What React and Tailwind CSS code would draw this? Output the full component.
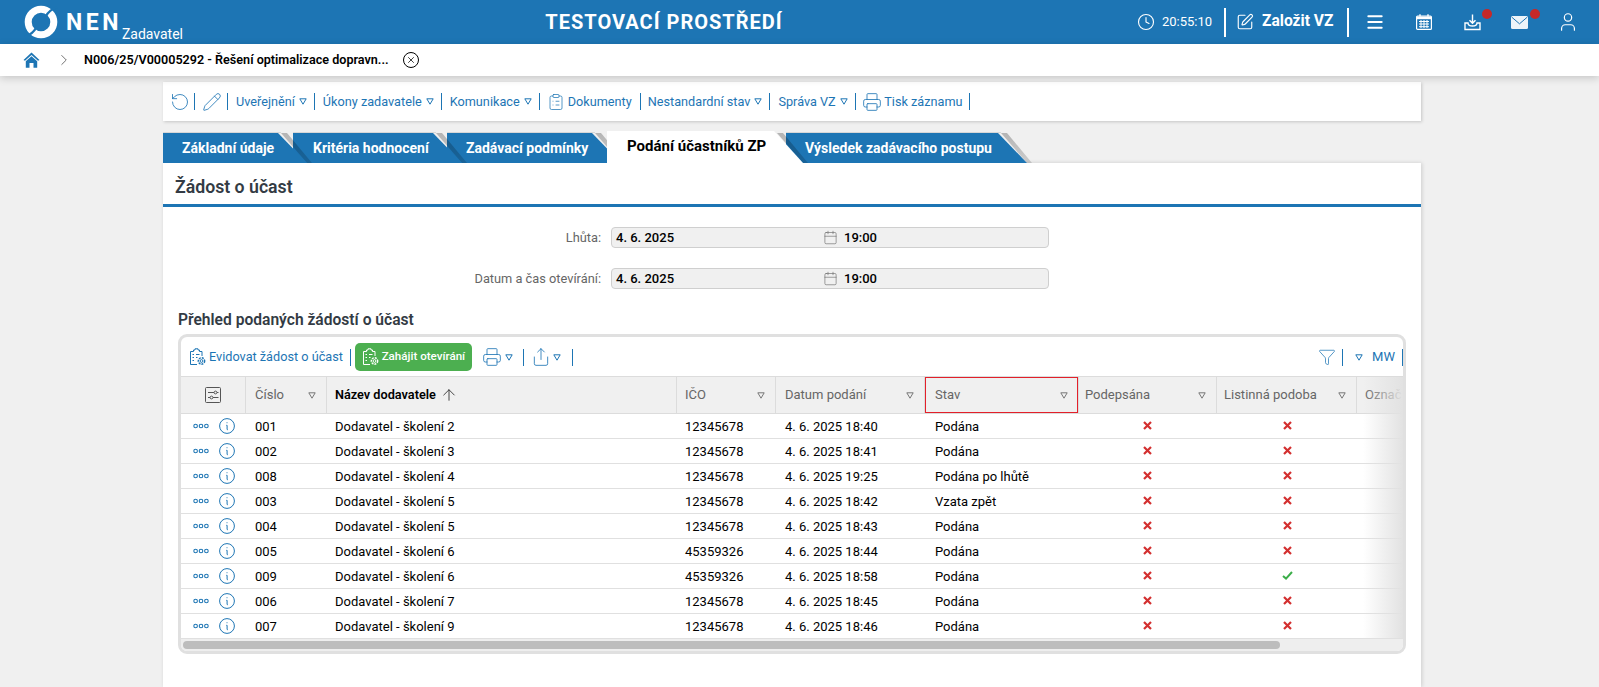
import { Clock, SquarePen, Menu, ChevronRight, RotateCcw, Pencil, ClipboardList, Printer, Share, Funnel, Calendar, ArrowUp, X, User } from 'lucide-react';

const BLUE = '#1d75b4';

const rows = [
  ['001', 'Dodavatel - školení 2', '12345678', '4. 6. 2025 18:40', 'Podána', false],
  ['002', 'Dodavatel - školení 3', '12345678', '4. 6. 2025 18:41', 'Podána', false],
  ['008', 'Dodavatel - školení 4', '12345678', '4. 6. 2025 19:25', 'Podána po lhůtě', false],
  ['003', 'Dodavatel - školení 5', '12345678', '4. 6. 2025 18:42', 'Vzata zpět', false],
  ['004', 'Dodavatel - školení 5', '12345678', '4. 6. 2025 18:43', 'Podána', false],
  ['005', 'Dodavatel - školení 6', '45359326', '4. 6. 2025 18:44', 'Podána', false],
  ['009', 'Dodavatel - školení 6', '45359326', '4. 6. 2025 18:58', 'Podána', true],
  ['006', 'Dodavatel - školení 7', '12345678', '4. 6. 2025 18:45', 'Podána', false],
  ['007', 'Dodavatel - školení 9', '12345678', '4. 6. 2025 18:46', 'Podána', false],
];

const gridCols = 'grid grid-cols-[65px_81px_350px_99px_149px_154px_138px_140px_46px]';

function Tri({ color = BLUE, className = '' }) {
  return (
    <svg width="8" height="7" viewBox="0 0 8 7" className={`shrink-0 ${className}`}>
      <path d="M0.8 0.8H7.2L4 6.2Z" fill="none" stroke={color} strokeWidth="1" />
    </svg>
  );
}

function Sep({ className = '' }) {
  return <span className={`block w-px h-[17px] bg-[#1d75b4] shrink-0 ${className}`} />;
}

function Logo() {
  return (
    <svg width="34" height="34" viewBox="0 0 34 34" className="shrink-0">
      <circle cx="17" cy="17" r="12.8" fill="none" stroke="#fff" strokeWidth="7" />
      <path d="M33 2C28 4 24.5 6.5 22 11" fill="none" stroke="#1d75b4" strokeWidth="2.4" />
      <path d="M1 32C6 30 9.5 27.5 12 23" fill="none" stroke="#1d75b4" strokeWidth="2.4" />
    </svg>
  );
}

function DownloadTray() {
  return (
    <svg width="17" height="17" viewBox="0 0 17 17" fill="none" stroke="#fff" strokeWidth="1.4" className="block">
      <path d="M8.5 0.5V9M5.5 6.2L8.5 9.3L11.5 6.2" />
      <path d="M4 9H1V15.5H16V9H13C13 11.5 11 12 8.5 12S4 11.5 4 9Z" />
    </svg>
  );
}

function MailFilled() {
  return (
    <svg width="17" height="13" viewBox="0 0 17 13" className="block">
      <rect width="17" height="13" rx="1.5" fill="#fff" fillOpacity="0.92" />
      <path d="M0.8 1.2L8.5 7.8L16.2 1.2" fill="none" stroke="#1d75b4" strokeWidth="1" />
    </svg>
  );
}

function CalendarGrid() {
  return (
    <svg width="16" height="16" viewBox="0 0 16 16" fill="none" stroke="#fff" className="shrink-0">
      <rect x="0.6" y="2.1" width="14.8" height="13.3" rx="1" strokeWidth="1.2" />
      <path d="M0.6 4H15.4" strokeWidth="2.4" />
      <path d="M4 0.3V2.5M12 0.3V2.5" strokeWidth="1.4" />
      <path d="M3 7.5H13M3 10H13M3 12.7H13M5 6V14M8 6V14M11 6V14" strokeWidth="1" />
    </svg>
  );
}

function HomeIcon() {
  return (
    <svg width="17" height="16" viewBox="0 0 17 16" className="block">
      <path d="M8.5 0.5L0.5 8L2 8.8L8.5 3L15 8.8L16.5 8Z" fill={BLUE} />
      <path d="M2.8 9.3L8.5 4.3L14.2 9.3V15.8H10.5V11H6.5V15.8H2.8Z" fill={BLUE} />
    </svg>
  );
}

function GearClipboard({ color = BLUE }) {
  return (
    <svg width="17" height="18" viewBox="0 0 17 18" fill="none" stroke={color} strokeWidth="1" className="shrink-0">
      <path d="M8 16.5H1.5V3.5H4.5V2H6V0.8H9V2H10.5V3.5H13V8" />
      <path d="M3.5 6.5H5M3.5 9.5H5M3.5 12.5H5M7 6.5H10.5M7 9.5H8.5" />
      <circle cx="12.5" cy="13" r="1.4" />
      <circle cx="12.5" cy="13" r="3.2" strokeDasharray="2 1" strokeWidth="1.4" />
    </svg>
  );
}

function InfoCircle() {
  return (
    <svg width="16" height="16" viewBox="0 0 16 16" fill="none" stroke={BLUE} strokeWidth="1">
      <circle cx="8" cy="8" r="7.4" />
      <path d="M8 4.3V5.2M7.3 7.3H8.1V11.2C8.1 11.8 8.6 11.9 9 11.6" />
    </svg>
  );
}

function Dots() {
  return (
    <svg width="16" height="6" viewBox="0 0 16 6" fill="none" stroke={BLUE} strokeWidth="1.1">
      <circle cx="2.6" cy="3" r="1.8" />
      <circle cx="8" cy="3" r="1.8" />
      <circle cx="13.4" cy="3" r="1.8" />
    </svg>
  );
}

function ColumnsIcon() {
  return (
    <svg width="16" height="16" viewBox="0 0 16 16" fill="none" stroke="#555" strokeWidth="1">
      <rect x="0.5" y="0.5" width="15" height="15" rx="1" />
      <path d="M3 5.5H9M12 5.5H13.5M3 10.5H5M8 10.5H13.5" />
      <circle cx="10.5" cy="5.5" r="1.4" />
      <circle cx="6.5" cy="10.5" r="1.4" />
    </svg>
  );
}

function CrossMark() {
  return (
    <svg width="9" height="9" viewBox="0 0 9 9" className="block mb-[2px]">
      <path d="M1 1L8 8M8 1L1 8" stroke="#d32f2f" strokeWidth="2.2" />
    </svg>
  );
}

function CheckMark() {
  return (
    <svg width="11" height="9" viewBox="0 0 11 9" className="block mb-[2px]">
      <path d="M1 5L4 7.6L10 1" fill="none" stroke="#3cae4a" strokeWidth="2" />
    </svg>
  );
}

function Tab({ children, className, pad = 'pl-[19px]', active }) {
  return (
    <div className={`relative h-[30px] ${className}`}>
      {!active && <span className="absolute -top-[1px] left-0 right-[26px] h-[1px] bg-black/10" />}
      <span className="absolute top-0 bottom-0 left-0 -right-[6px] bg-gradient-to-b from-black/25 to-black/15 [clip-path:polygon(calc(100%-32px)_0,calc(100%-26px)_0,calc(100%-1px)_100%,calc(100%-6px)_100%)]" />
      <div
        className={`flex items-center font-bold whitespace-nowrap [clip-path:polygon(0_0,calc(100%-29px)_0,100%_100%,0_100%)] ${pad} ${
          active ? 'bg-white text-black text-[15px] -mt-[2px] h-[32px] pb-[2px]' : 'h-full pt-[1px] bg-[#1d75b4] text-white text-[14px]'
        }`}
      >
        {children}
      </div>
    </div>
  );
}

function HeaderCell({ label, bold, sorted, highlighted, last, pl = 'pl-[9px]' }) {
  return (
    <div
      className={`relative flex items-center justify-between pr-[10px] h-[36px] bg-[#f0f0f0] whitespace-nowrap overflow-hidden ${pl} ${
        last ? 'pr-0' : 'border-r border-[#dcdcdc]'
      } ${bold ? 'text-black font-semibold text-[12.7px]' : 'text-[#666]'}`}
    >
      <span className="flex items-center gap-[4px]">
        {label}
        {sorted && <ArrowUp size={18} strokeWidth={1.2} className="text-[#333]" />}
      </span>
      {!sorted && !last && <Tri color="#777" />}
      {highlighted && <span className="absolute inset-0 border border-[#e3202a]" />}
    </div>
  );
}

function DateField() {
  return (
    <div className="ml-[10px] w-[438px] h-[21px] bg-[#f0f0f0] border border-[#cfcfcf] rounded-[4px] flex items-center pl-[4px] font-medium text-black">
      <span className="w-[207px]">4. 6. 2025</span>
      <Calendar size={15} strokeWidth={1} className="text-[#666]" />
      <span className="ml-[6px]">19:00</span>
    </div>
  );
}

export default function App() {
  return (
    <div className="h-[687px] overflow-hidden bg-[#f0f0f0] text-[13px] flex flex-col font-['Roboto',sans-serif]">
      <header className="relative h-[44px] bg-[#1d75b4] text-white flex items-center shrink-0">
        <div className="flex items-center pl-[24px] w-[191px] shrink-0">
          <Logo />
          <span className="ml-[8px] text-[23px] leading-none font-bold tracking-[3.5px]">NEN</span>
          <span className="self-end mt-[22px] text-[14px] leading-[16px] translate-y-[1px]">Zadavatel</span>
        </div>
        <div className="flex-1 text-center text-[20px] font-bold tracking-[1px]">TESTOVACÍ PROSTŘEDÍ</div>
        <div className="flex items-center shrink-0 pr-[20px]">
          <Clock size={18} strokeWidth={1.5} />
          <span className="ml-[7px] w-[50px]">20:55:10</span>
          <span className="ml-[12px] w-[2px] h-[29px] bg-white" />
          <SquarePen size={18} strokeWidth={1.5} className="ml-[10px]" />
          <span className="ml-[8px] text-[15.6px] font-bold w-[72px] whitespace-nowrap">Založit VZ</span>
          <span className="ml-[13px] w-[2px] h-[29px] bg-white" />
          <Menu size={20} strokeWidth={2.4} className="ml-[16px]" />
          <span className="ml-[31px]"><CalendarGrid /></span>
          <span className="relative ml-[32px] block">
            <DownloadTray />
            <span className="absolute -top-[5px] left-[18px] w-[10px] h-[10px] rounded-full bg-[#c62828]" />
          </span>
          <span className="relative ml-[30px] block">
            <MailFilled />
            <span className="absolute -top-[7px] left-[19px] w-[10px] h-[10px] rounded-full bg-[#c62828]" />
          </span>
          <User size={22} strokeWidth={1.3} className="ml-[29px]" />
        </div>
      </header>

      <nav className="relative z-10 h-[32px] bg-white shadow-[0_2px_8px_rgba(0,0,0,0.18)] flex items-center shrink-0">
        <span className="ml-[23px]"><HomeIcon /></span>
        <ChevronRight size={18} strokeWidth={1} className="ml-[15px] text-[#444]" />
        <span className="ml-[11px] font-semibold text-[12.6px] text-black whitespace-nowrap">N006/25/V00005292 - Řešení optimalizace dopravn...</span>
        <span className="ml-[14px] w-[16px] h-[16px] rounded-full border border-black flex items-center justify-center">
          <X size={10} strokeWidth={1.8} className="text-black" />
        </span>
      </nav>

      <div className="ml-[163px] w-[1258px] flex-1 flex flex-col">
        <div className="mt-[6px] h-[39px] bg-white shadow-[1px_1px_3px_rgba(0,0,0,0.18)] flex items-center gap-[8px] pl-[7px] text-[#1d75b4] text-[12.7px]">
          <RotateCcw size={20} strokeWidth={1} className="-ml-[0.5px] -mr-[3.5px]" />
          <Sep />
          <Pencil size={20} strokeWidth={1} className="-ml-[1px] -mr-[3px]" />
          <Sep />
          <span>Uveřejnění</span>
          <Tri className="-ml-[4px] -mr-[1px]" />
          <Sep />
          <span>Úkony zadavatele</span>
          <Tri className="-ml-[4px] -mr-[1px]" />
          <Sep />
          <span>Komunikace</span>
          <Tri className="-ml-[4px] -mr-[1px]" />
          <Sep />
          <ClipboardList size={18} strokeWidth={1} className="-ml-[1px]" />
          <span className="-ml-[5px]">Dokumenty</span>
          <Sep />
          <span className="-ml-[1px]">Nestandardní stav</span>
          <Tri className="-ml-[4px] -mr-[1px]" />
          <Sep />
          <span>Správa VZ</span>
          <Tri className="-ml-[4px] -mr-[1px]" />
          <Sep />
          <Printer size={20} strokeWidth={1} className="-ml-[1.5px]" />
          <span className="-ml-[6px]">Tisk záznamu</span>
          <Sep className="-ml-[2px]" />
        </div>

        <div className="mt-[12px] flex shrink-0">
          <Tab className="w-[144px] z-[5]">Základní údaje</Tab>
          <Tab className="w-[169px] -ml-[14px] z-[4]" pad="pl-[20px]">Kritéria hodnocení</Tab>
          <Tab className="w-[174px] -ml-[15px] z-[3]">Zadávací podmínky</Tab>
          <Tab className="w-[196px] -ml-[14px] z-[5]" pad="pl-[20px]" active>Podání účastníků ZP</Tab>
          <Tab className="w-[241px] -ml-[17px] z-[2]">Výsledek zadávacího postupu</Tab>
        </div>

        <main className="flex-1 bg-white shadow-[1px_0_4px_rgba(0,0,0,0.15)]">
          <h1 className="h-[44px] border-b-[3px] border-[#1d75b4] pl-[12px] pt-[8px] flex items-center text-[17.7px] font-semibold text-[#333b44]">Žádost o účast</h1>

          <div className="mt-[20px] flex items-center h-[21px]">
            <label className="w-[438px] text-right text-[#666] text-[12.8px]">Lhůta:</label>
            <DateField />
          </div>
          <div className="mt-[20px] flex items-center h-[21px]">
            <label className="w-[438px] text-right text-[#666] text-[12.8px]">Datum a čas otevírání:</label>
            <DateField />
          </div>

          <h2 className="mt-[21px] ml-[15px] h-[20px] leading-[20px] text-[15.6px] font-semibold text-[#333b44]">Přehled podaných žádostí o účast</h2>

          <section className="relative mt-[4px] ml-[15px] w-[1228px] h-[320px] border-[3px] border-[#e0e0e0] rounded-[9px] overflow-hidden">
            <div className="h-[40px] flex items-center pl-[8px] text-[#1d75b4]">
              <GearClipboard />
              <span className="ml-[3px] text-[12.7px]">Evidovat žádost o účast</span>
              <Sep className="ml-[7px]" />
              <button className="ml-[4px] h-[28px] w-[117px] rounded-[5px] bg-[#4caf50] text-white text-[11.6px] font-medium flex items-center justify-center gap-[3px]">
                <GearClipboard color="#fff" />
                Zahájit otevírání
              </button>
              <Printer size={20} strokeWidth={1} className="ml-[10px]" />
              <Tri className="ml-[3px]" />
              <Sep className="ml-[10px]" />
              <Share size={20} strokeWidth={1} className="ml-[7px]" />
              <Tri className="ml-[2px]" />
              <Sep className="ml-[11px]" />
              <div className="ml-auto flex items-center">
                <Funnel size={18} strokeWidth={1} />
                <Sep className="ml-[6px]" />
                <Tri className="ml-[12px]" />
                <span className="ml-[9px]">MW</span>
                <Sep className="ml-[7px]" />
              </div>
            </div>

            <div className={`${gridCols} border-t border-[#dcdcdc] border-b border-b-[#dcdcdc] -mt-[1px]`}>
              <div className="h-[36px] bg-[#f0f0f0] border-r border-[#dcdcdc] flex items-center justify-center"><ColumnsIcon /></div>
              <HeaderCell label="Číslo" />
              <HeaderCell label="Název dodavatele" bold sorted pl="pl-[8px]" />
              <HeaderCell label="IČO" pl="pl-[8px]" />
              <HeaderCell label="Datum podání" />
              <HeaderCell label="Stav" highlighted pl="pl-[10px]" />
              <HeaderCell label="Podepsána" pl="pl-[6px]" />
              <HeaderCell label="Listinná podoba" pl="pl-[7px]" />
              <HeaderCell label="Označ" last pl="pl-[8px]" />
            </div>

            {rows.map((r) => (
              <div key={r[0] + r[1]} className={`${gridCols} h-[25px] items-center border-b border-[#e0e0e0] text-black`}>
                <div className="flex items-center pl-[12px] gap-[10px]"><Dots /><InfoCircle /></div>
                <div className="pl-[9px] pt-[2px]">{r[0]}</div>
                <div className="pl-[8px] pt-[2px]">{r[1]}</div>
                <div className="pl-[8px] pt-[2px]">{r[2]}</div>
                <div className="pl-[9px] pt-[2px]">{r[3]}</div>
                <div className="pl-[10px] pt-[2px]">{r[4]}</div>
                <div className="flex justify-center pr-[2px]"><CrossMark /></div>
                <div className="flex justify-center">{r[5] ? <CheckMark /> : <CrossMark />}</div>
                <div />
              </div>
            ))}

            <div className="h-[13px] bg-[#eeeeee] pt-[2px] pl-[2px]">
              <div className="w-[1097px] h-[8px] rounded-full bg-[#bdbdbd]" />
            </div>

            <span className="absolute top-[40px] right-0 bottom-[13px] w-[40px] bg-gradient-to-r from-white/0 to-[#e2e2e2]" />
          </section>
        </main>
      </div>
    </div>
  );
}
